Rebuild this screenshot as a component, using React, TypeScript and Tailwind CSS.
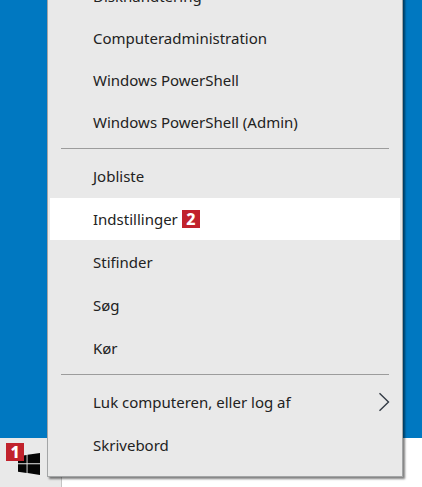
import { ReactNode } from 'react';
import clsx from 'clsx';

interface MenuEntry {
  label: string;
  step?: number;
  active?: boolean;
  submenu?: boolean;
}

const groups: MenuEntry[][] = [
  [
    { label: 'Diskhåndtering' },
    { label: 'Computeradministration' },
    { label: 'Windows PowerShell' },
    { label: 'Windows PowerShell (Admin)' },
  ],
  [
    { label: 'Jobliste' },
    { label: 'Indstillinger', step: 2, active: true },
    { label: 'Stifinder' },
    { label: 'Søg' },
    { label: 'Kør' },
  ],
  [
    { label: 'Luk computeren, eller log af', submenu: true },
    { label: 'Skrivebord' },
  ],
];

function StepBadge({ children }: { children: ReactNode }) {
  return (
    <span className="flex size-[18px] items-center justify-center bg-[#c1222c] text-base leading-4 font-extrabold text-white">
      {children}
    </span>
  );
}

function WindowsLogo() {
  return (
    <svg viewBox="0 0 22 22" className="size-[22px]" fill="#050505" aria-hidden="true">
      <path d="M0 3.2 8.6 2v8.3H0zM9.5 1.8 22 0v10.3H9.5zM0 11.3h8.6v8.6L0 18.7zM9.5 11.3H22V22L9.5 20.1z" />
    </svg>
  );
}

function Chevron() {
  return (
    <svg viewBox="0 0 12 20" className="h-5 w-3" fill="none" stroke="#333b45" strokeWidth="1.4" aria-hidden="true">
      <path d="M1.5 1.2 10.5 10l-9 8.8" />
    </svg>
  );
}

function MenuRow({ label, step, active, submenu }: MenuEntry) {
  return (
    <button
      role="menuitem"
      aria-haspopup={submenu ? 'menu' : undefined}
      className={clsx(
        'flex h-[42px] w-full items-center gap-1 pr-2.5 pl-[43px] text-left hover:bg-white',
        active && 'bg-white',
      )}
    >
      <span>{label}</span>
      {step && <StepBadge>{step}</StepBadge>}
      {submenu && (
        <span className="ml-auto">
          <Chevron />
        </span>
      )}
    </button>
  );
}

export default function App() {
  return (
    <div className="relative flex min-h-screen flex-col overflow-hidden bg-[#0078c1] font-['Noto_Sans',sans-serif] text-[15px] text-[#222]">
      <main className="flex-1" />

      {/* Taskbar */}
      <footer className="flex h-[49px] bg-white">
        <button
          aria-label="Start"
          className="relative flex w-[62px] items-start border-r border-[#c4c4c4] bg-[#e9e9e9] pt-[15px] pl-[18px]"
        >
          <WindowsLogo />
          <span className="absolute top-[5px] left-1.5">
            <StepBadge>1</StepBadge>
          </span>
        </button>
      </footer>

      {/* Start button context menu */}
      <nav
        role="menu"
        className="absolute right-[19px] bottom-[10px] left-[47px] border border-[#a3a5a6] bg-[#e9e9e9] px-0.5 pb-[10px] shadow-[2px_2px_2px_rgba(0,0,0,0.5)]"
      >
        {groups.map((group, i) => (
          <div key={group[0].label}>
            {i > 0 && <hr className="mx-[11px] mt-[5px] mb-1.5 border-[#9c9c9c]" />}
            <div className={clsx('flex flex-col', i > 0 && 'gap-px')}>
              {group.map((entry) => (
                <MenuRow key={entry.label} {...entry} />
              ))}
            </div>
          </div>
        ))}
      </nav>
    </div>
  );
}
